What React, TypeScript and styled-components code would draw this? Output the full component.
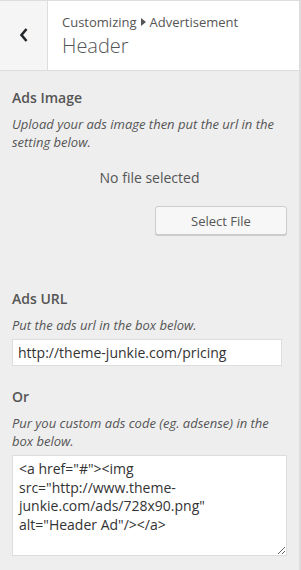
import React from 'react';
import styled, { createGlobalStyle } from 'styled-components';

const GlobalStyle = createGlobalStyle`
  html, body {
    margin: 0;
    padding: 0;
    background: #eeeeee;
  }
  body {
    font-family: "Open Sans", "Liberation Sans", sans-serif;
    color: #555;
  }
  * { box-sizing: border-box; }
`;

const Panel = styled.div`
  width: 301px;
  height: 570px;
  background: #eeeeee;
  border-right: 2px solid #dddddd;
  overflow: hidden;
`;

const Header = styled.div`
  display: flex;
  height: 71px;
  border-top: 1px solid #dddddd;
  border-bottom: 1px solid #dddddd;
  background: #fff;
`;

const BackButton = styled.button`
  width: 48px;
  flex: 0 0 48px;
  display: flex;
  align-items: center;
  justify-content: center;
  padding: 0 0 1px 0;
  background: #f5f5f5;
  border: none;
  border-right: 1px solid #dddddd;
  cursor: pointer;
`;

const TitleBlock = styled.div`
  display: flex;
  flex-direction: column;
  padding: 11px 0 0 14px;
`;

const Breadcrumb = styled.div`
  display: flex;
  align-items: center;
  gap: 4px;
  font-size: 13px;
  line-height: 20px;
  color: #555;
`;

const Title = styled.div`
  font-size: 20px;
  font-weight: 300;
  line-height: 28px;
  color: #555;
`;

const Content = styled.div`
  padding: 17px 12px 0 12px;
`;

const Section = styled.div<{ $gap?: number }>`
  margin-bottom: ${(p) => p.$gap ?? 0}px;
`;

const Label = styled.div`
  font-size: 14px;
  font-weight: 600;
  line-height: 20px;
  color: #555;
  margin-bottom: 7px;
`;

const Description = styled.div`
  font-size: 13px;
  font-style: italic;
  line-height: 18px;
  color: #555;
  margin-bottom: 5px;
`;

const NoFile = styled.div`
  text-align: center;
  font-size: 14px;
  line-height: 20px;
  margin: 17px 0 18px 0;
  color: #555;
`;

const ButtonRow = styled.div`
  display: flex;
  justify-content: flex-end;
`;

const SelectButton = styled.button`
  width: 132px;
  height: 29px;
  font-family: "Open Sans", "Liberation Sans", sans-serif;
  font-size: 13px;
  color: #555;
  background: #f7f7f7;
  border: 1px solid #cccccc;
  border-radius: 3px;
  box-shadow: 0 1px 0 #cccccc;
  cursor: pointer;
`;

const TextInput = styled.input`
  display: block;
  width: 270px;
  height: 27px;
  padding: 0 5px;
  font-family: "Open Sans", "Liberation Sans", sans-serif;
  font-size: 14px;
  color: #333;
  background: #fff;
  border: 1px solid #dddddd;
  outline: none;
`;

const CodeArea = styled.textarea`
  display: block;
  width: 275px;
  height: 101px;
  padding: 4px 6px;
  font-family: "Open Sans", "Liberation Sans", sans-serif;
  font-size: 14px;
  line-height: 18.5px;
  color: #333;
  background: #fff;
  border: 1px solid #dddddd;
  outline: none;
  resize: vertical;
`;

const App: React.FC = () => {
  return (
    <>
      <GlobalStyle />
      <Panel>
        <Header>
          <BackButton aria-label="Back">
            <svg width="10" height="16" viewBox="0 0 10 16">
              <path d="M7.5 2 L2.5 8 L7.5 14" fill="none" stroke="#23282d" strokeWidth="2.6" />
            </svg>
          </BackButton>
          <TitleBlock>
            <Breadcrumb>
              <span>Customizing</span>
              <svg width="5" height="8" viewBox="0 0 5 8">
                <path d="M0 0 L5 4 L0 8 Z" fill="#555" />
              </svg>
              <span>Advertisement</span>
            </Breadcrumb>
            <Title>Header</Title>
          </TitleBlock>
        </Header>
        <Content>
          <Section $gap={54}>
            <Label>Ads Image</Label>
            <Description>Upload your ads image then put the url in the setting below.</Description>
            <NoFile>No file selected</NoFile>
            <ButtonRow>
              <SelectButton>Select File</SelectButton>
            </ButtonRow>
          </Section>
          <Section $gap={21}>
            <Label>Ads URL</Label>
            <Description>Put the ads url in the box below.</Description>
            <TextInput type="text" defaultValue="http://theme-junkie.com/pricing" />
          </Section>
          <Section>
            <Label>Or</Label>
            <Description>Pur you custom ads code (eg. adsense) in the box below.</Description>
            <CodeArea
              defaultValue={'<a href="#"><img src="http://www.theme-junkie.com/ads/728x90.png" alt="Header Ad"/></a>'}
            />
          </Section>
        </Content>
      </Panel>
    </>
  );
};

export default App;
